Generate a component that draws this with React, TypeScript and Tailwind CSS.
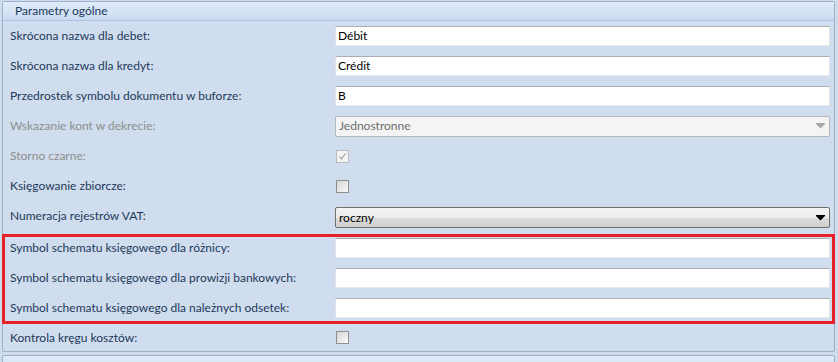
import React from "react";

const font = { fontFamily: 'Lato, "Noto Sans", sans-serif' };

function TextBox({ value }: { value?: string }) {
  return (
    <div className="ml-auto flex h-[20px] w-[495px] items-center border border-t-[#abadb3] border-x-[#e2e3ea] border-b-[#e3e9ef] bg-white pl-[2px] text-[12px] text-black">
      {value}
    </div>
  );
}

function Check({ disabled, checked }: { disabled?: boolean; checked?: boolean }) {
  return (
    <div className="ml-[333px] flex h-[13px] w-[13px] items-center justify-center">
      <div
        className={
          "flex h-[13px] w-[13px] items-center justify-center border " +
          (disabled ? "border-[#b8bcc2] bg-[#f3f3f3]" : "border-[#8e8f8f] bg-gradient-to-br from-[#d5d5d5] to-[#fbfbfb]")
        }
      >
        {checked && (
          <svg width="9" height="9" viewBox="0 0 9 9">
            <path d="M1.5 4.5 L3.5 7 L7.5 1.5" fill="none" stroke="#a3a3a3" strokeWidth="1.2" />
          </svg>
        )}
      </div>
    </div>
  );
}

function Arrow({ color }: { color: string }) {
  return (
    <svg width="9" height="6" viewBox="0 0 9 6" className="mr-[4px]">
      <path d="M0 0 H9 V1 L4.5 5.5 L0 1 Z" fill={color} />
    </svg>
  );
}

function Row({
  label,
  disabled,
  children,
  h = "h-[30px]",
}: {
  label: string;
  disabled?: boolean;
  children: React.ReactNode;
  h?: string;
}) {
  return (
    <div className={"flex items-center pr-[4px] " + h}>
      <div className={"absolute pl-[7px] text-[12px] " + (disabled ? "text-[#8d8d8d]" : "text-[#1e395b]")}>{label}</div>
      <div className="flex w-full items-center">{children}</div>
    </div>
  );
}

export default function App() {
  return (
    <div className="relative h-[362px] w-[838px] overflow-hidden bg-[#cfdcee] pt-[1px]" style={font}>
      <div className="ml-[2px] w-[833px] rounded-[2px] border border-[#9db1cd] bg-[#cfddee]">
        <div className="flex h-[19px] items-center border-b border-[#aec4e2] bg-gradient-to-b from-[#e2ecf9] to-[#c9dbf2] pl-[12px] text-[12px] text-[#1e395b]">
          Parametry ogólne
        </div>
        <Row label="Skrócona nazwa dla debet:">
          <TextBox value="Débit" />
        </Row>
        <Row label="Skrócona nazwa dla kredyt:">
          <TextBox value="Crédit" />
        </Row>
        <Row label="Przedrostek symbolu dokumentu w buforze:">
          <TextBox value="B" />
        </Row>
        <Row label="Wskazanie kont w dekrecie:" disabled>
          <div className="ml-auto flex h-[21px] w-[495px] items-center justify-between rounded-[2px] border border-[#b3b6ba] bg-[#f4f4f4] pl-[3px] text-[12px] text-[#6d6d6d]">
            <span>Jednostronne</span>
            <Arrow color="#a9a9a9" />
          </div>
        </Row>
        <Row label="Storno czarne:" disabled>
          <Check disabled checked />
        </Row>
        <Row label="Księgowanie zbiorcze:">
          <Check />
        </Row>
        <Row label="Numeracja rejestrów VAT:">
          <div className="ml-auto mt-[3px] flex h-[21px] w-[495px] items-center justify-between rounded-[2px] border border-[#6f6f6f] bg-[linear-gradient(#f3f3f3_0%,#ebebeb_50%,#dddddd_51%,#cfcfcf_100%)] pl-[3px] text-[12px] text-black">
            <span>roczny</span>
            <Arrow color="#000000" />
          </div>
        </Row>
        <div className="-mx-[1px] mt-[3px] flex flex-col gap-[10px] border-[3px] border-[#e8202a] pt-[1px] pb-[3px] pr-[2px]">
          {[
            "Symbol schematu księgowego dla różnicy:",
            "Symbol schematu księgowego dla prowizji bankowych:",
            "Symbol schematu księgowego dla należnych odsetek:",
          ].map((l) => (
            <div key={l} className="flex h-[20px] items-center">
              <div className="absolute pl-[5px] text-[12px] text-[#1e395b]">{l}</div>
              <TextBox />
            </div>
          ))}
        </div>
        <Row label="Kontrola kręgu kosztów:" h="h-[27px]">
          <Check />
        </Row>
      </div>
      <div className="ml-[2px] mt-[3px] h-[20px] w-[833px] rounded-[2px] border border-[#9db1cd] bg-gradient-to-b from-[#e2ecf9] to-[#c9dbf2]" />
    </div>
  );
}
